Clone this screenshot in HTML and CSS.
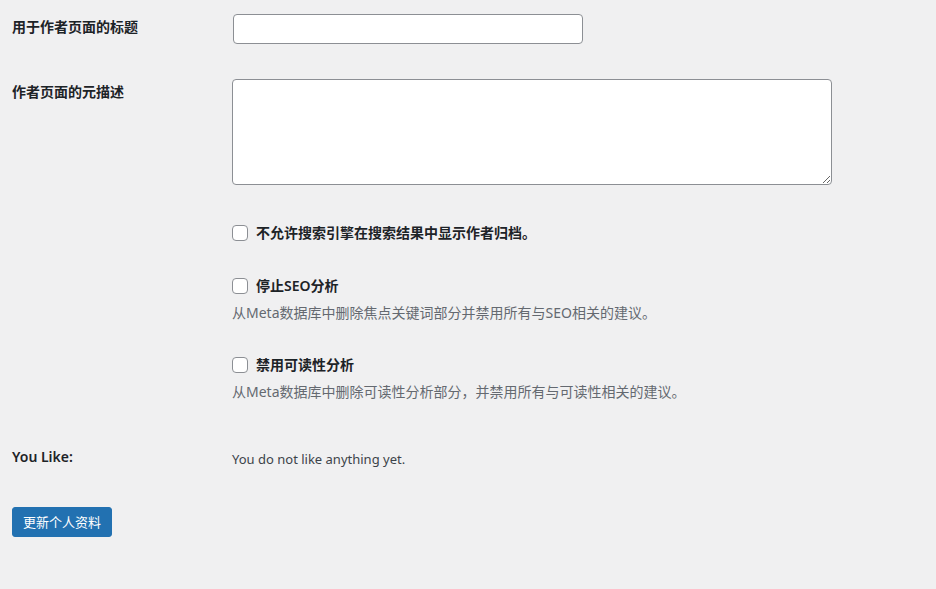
FILE: index.html
```html
<!DOCTYPE html>
<html lang="zh-CN">
<head>
<meta charset="utf-8">
<title>个人资料</title>
<link rel="stylesheet" href="styles.css">
</head>
<body>
<form class="profile">
  <div class="row row-title">
    <label class="label" for="t1">用于作者页面的标题</label>
    <div class="field"><input id="t1" class="text-input" type="text"></div>
  </div>
  <div class="row row-desc">
    <label class="label" for="t2">作者页面的元描述</label>
    <div class="field"><textarea id="t2" class="textarea"></textarea></div>
  </div>
  <div class="row row-cb1">
    <div class="label"></div>
    <div class="field">
      <label class="check"><input type="checkbox" class="cb"><span>不允许搜索引擎在搜索结果中显示作者归档。</span></label>
    </div>
  </div>
  <div class="row row-cb2">
    <div class="label"></div>
    <div class="field">
      <label class="check"><input type="checkbox" class="cb"><span>停止SEO分析</span></label>
      <p class="desc">从Meta数据库中删除焦点关键词部分并禁用所有与SEO相关的建议。</p>
    </div>
  </div>
  <div class="row row-cb3">
    <div class="label"></div>
    <div class="field">
      <label class="check"><input type="checkbox" class="cb"><span>禁用可读性分析</span></label>
      <p class="desc">从Meta数据库中删除可读性分析部分，并禁用所有与可读性相关的建议。</p>
    </div>
  </div>
  <div class="row row-like">
    <div class="label">You Like:</div>
    <div class="field like-text">You do not like anything yet.</div>
  </div>
  <div class="actions">
    <button type="button" class="button-primary">更新个人资料</button>
  </div>
</form>
</body>
</html>
```

FILE: styles.css
```css
html, body {
  margin: 0;
  padding: 0;
  background: #f0f0f1;
}
body {
  font-family: "Noto Sans", "Noto Sans CJK SC", sans-serif;
  font-size: 14px;
  color: #1d2327;
  line-height: 20px;
}
.profile {
  padding: 14px 0 0 12px;
}
.row {
  display: grid;
  grid-template-columns: 220px 1fr;
}
.label {
  font-weight: 600;
  padding-top: 3px;
  line-height: 20px;
}
.field {
  min-width: 0;
}
.text-input {
  display: block;
  box-sizing: border-box;
  width: 350px;
  height: 30px;
  margin: 0 0 0 1px;
  border: 1px solid #8c8f94;
  border-radius: 4px;
  background: #fff;
  font: inherit;
}
.row-desc {
  margin-top: 35px;
}
.textarea {
  display: block;
  box-sizing: border-box;
  width: 600px;
  height: 106px;
  margin: 0;
  border: 1px solid #8c8f94;
  border-radius: 4px;
  background: #fff;
  font: inherit;
}
.row-cb1 { margin-top: 38px; }
.row-cb2 { margin-top: 33px; }
.row-cb3 { margin-top: 32px; }
.row-cb1 .label, .row-cb2 .label, .row-cb3 .label { padding-top: 0; }
.check {
  display: flex;
  align-items: center;
  gap: 8px;
  font-weight: 600;
  height: 20px;
}
.cb {
  appearance: none;
  -webkit-appearance: none;
  box-sizing: border-box;
  width: 16px;
  height: 16px;
  margin: 0;
  border: 1px solid #8c8f94;
  border-radius: 4px;
  background: #fff;
  flex: none;
}
.desc {
  margin: 7px 0 0;
  color: #646970;
  line-height: 20px;
}
.row-like {
  margin-top: 45px;
}
.row-like .label {
  padding-top: 0;
}
.like-text {
  padding-top: 2px;
  font-size: 13px;
  color: #3c434a;
}
.actions {
  margin-top: 38px;
}
.button-primary {
  box-sizing: border-box;
  height: 30px;
  width: 100px;
  padding: 0 10px;
  border: 1px solid #2271b1;
  border-radius: 3px;
  background: #2271b1;
  color: #fff;
  font: inherit;
  font-size: 13px;
  line-height: 28px;
  cursor: pointer;
}
```
